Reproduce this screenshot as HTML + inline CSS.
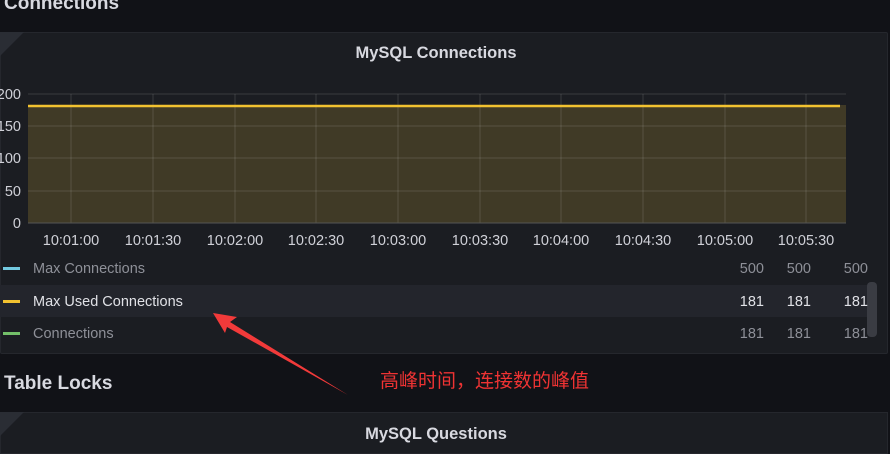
<!DOCTYPE html><html><head><style>
body{margin:0;width:890px;height:444px;background:#111217;overflow:hidden;font-family:"Liberation Sans","Noto Sans CJK SC",sans-serif;position:relative}
.a{position:absolute}
</style></head><body>
<div class="a" style="left:4px;top:-7px;font-size:19px;font-weight:bold;color:#d8d9e0">Connections</div>
<div class="a" style="left:0;top:32px;width:886px;height:320px;background:#1b1d22;border:1px solid #25272d;border-radius:2px"></div>
<svg class="a" style="left:0;top:32px" width="24" height="24"><polygon points="0,0 24,0 0,24" fill="#2a2d34"/></svg>
<div class="a" style="left:0;top:44px;width:872px;text-align:center;font-size:16.5px;font-weight:bold;color:#d8d9e0">MySQL Connections</div>
<svg class="a" style="left:0;top:0" width="890" height="444">
<rect x="28" y="105" width="818" height="118" fill="#403a26"/>
<g stroke="#ffffff" stroke-opacity="0.13" stroke-width="1">
<line x1="28" y1="94" x2="846" y2="94"/><line x1="28" y1="126" x2="846" y2="126"/><line x1="28" y1="158" x2="846" y2="158"/><line x1="28" y1="191" x2="846" y2="191"/>
<line x1="71" y1="94" x2="71" y2="223"/><line x1="153" y1="94" x2="153" y2="223"/><line x1="235" y1="94" x2="235" y2="223"/><line x1="316" y1="94" x2="316" y2="223"/><line x1="398" y1="94" x2="398" y2="223"/><line x1="480" y1="94" x2="480" y2="223"/><line x1="561" y1="94" x2="561" y2="223"/><line x1="643" y1="94" x2="643" y2="223"/><line x1="725" y1="94" x2="725" y2="223"/><line x1="806" y1="94" x2="806" y2="223"/>
</g>
<line x1="28" y1="223" x2="846" y2="223" stroke="#555" />
<line x1="28" y1="106" x2="840" y2="106" stroke="#f2c230" stroke-width="2.5"/>
<g fill="#d0d1d8" font-size="14.5" text-anchor="end"><text x="21" y="99">200</text><text x="21" y="131">150</text><text x="21" y="163">100</text><text x="21" y="196">50</text><text x="21" y="228">0</text></g>
<g fill="#d0d1d8" font-size="14.5" text-anchor="middle"><text x="71" y="245">10:01:00</text><text x="153" y="245">10:01:30</text><text x="235" y="245">10:02:00</text><text x="316" y="245">10:02:30</text><text x="398" y="245">10:03:00</text><text x="480" y="245">10:03:30</text><text x="561" y="245">10:04:00</text><text x="643" y="245">10:04:30</text><text x="725" y="245">10:05:00</text><text x="806" y="245">10:05:30</text></g>
<rect x="0" y="285" width="871" height="32" fill="#23252c"/>
<rect x="867" y="282" width="10" height="55" rx="4" fill="#3a3c43"/>
<rect x="3" y="267" width="17" height="3" fill="#73c9e0"/><rect x="3" y="300" width="17" height="3" fill="#f2c230"/><rect x="3" y="332" width="17" height="3" fill="#73bf69"/>
<g font-size="14.5"><text x="33" y="273" fill="#8e9098">Max Connections</text><text x="33" y="306" fill="#e0e1e6">Max Used Connections</text><text x="33" y="338" fill="#8e9098">Connections</text></g>
<g font-size="14.5" text-anchor="end" fill="#8e9098"><text x="764" y="273">500</text><text x="811" y="273">500</text><text x="868" y="273">500</text><text x="764" y="338">181</text><text x="811" y="338">181</text><text x="868" y="338">181</text></g>
<g font-size="14.5" text-anchor="end" fill="#e0e1e6"><text x="764" y="306">181</text><text x="811" y="306">181</text><text x="868" y="306">181</text></g>
<polygon points="213,313 237,317 230,322 348,395 227,327 225,333" fill="#f23a3a"/>
<text x="380" y="387" font-size="19" fill="#ee3333" font-family="Noto Sans CJK SC,sans-serif">高峰时间，连接数的峰值</text>
</svg>
<div class="a" style="left:4px;top:373px;font-size:19px;font-weight:bold;color:#d8d9e0">Table Locks</div>
<div class="a" style="left:0;top:412px;width:886px;height:40px;background:#1b1d22;border:1px solid #25272d"></div>
<svg class="a" style="left:0;top:412px" width="24" height="24"><polygon points="0,0 24,0 0,24" fill="#2a2d34"/></svg>
<div class="a" style="left:0;top:425px;width:872px;text-align:center;font-size:16.5px;font-weight:bold;color:#d8d9e0">MySQL Questions</div>
</body></html>
